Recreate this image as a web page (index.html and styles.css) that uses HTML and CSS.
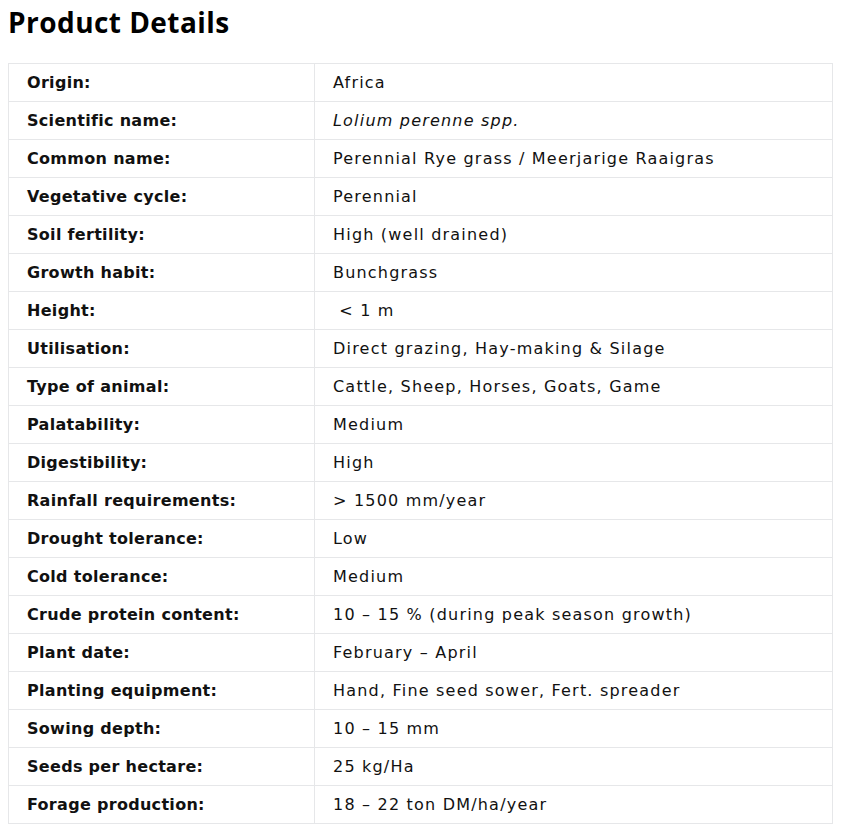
FILE: index.html
```html
<!DOCTYPE html>
<html>
<head>
<meta charset="utf-8">
<link rel="stylesheet" href="styles.css">
</head>
<body>
<h2 class="title">Product Details</h2>
<table class="details">
<tbody>
<tr><td class="label">Origin:</td><td class="value">Africa</td></tr>
<tr><td class="label">Scientific name:</td><td class="value"><em>Lolium perenne spp.</em></td></tr>
<tr><td class="label">Common name:</td><td class="value">Perennial Rye grass / Meerjarige Raaigras</td></tr>
<tr><td class="label">Vegetative cycle:</td><td class="value">Perennial</td></tr>
<tr><td class="label">Soil fertility:</td><td class="value">High (well drained)</td></tr>
<tr><td class="label">Growth habit:</td><td class="value">Bunchgrass</td></tr>
<tr><td class="label">Height:</td><td class="value">&nbsp;&lt; 1 m</td></tr>
<tr><td class="label">Utilisation:</td><td class="value">Direct grazing, Hay-making &amp; Silage</td></tr>
<tr><td class="label">Type of animal:</td><td class="value">Cattle, Sheep, Horses, Goats, Game</td></tr>
<tr><td class="label">Palatability:</td><td class="value">Medium</td></tr>
<tr><td class="label">Digestibility:</td><td class="value">High</td></tr>
<tr><td class="label">Rainfall requirements:</td><td class="value">&gt; 1500 mm/year</td></tr>
<tr><td class="label">Drought tolerance:</td><td class="value">Low</td></tr>
<tr><td class="label">Cold tolerance:</td><td class="value">Medium</td></tr>
<tr><td class="label">Crude protein content:</td><td class="value">10 – 15 % (during peak season growth)</td></tr>
<tr><td class="label">Plant date:</td><td class="value">February – April</td></tr>
<tr><td class="label">Planting equipment:</td><td class="value">Hand, Fine seed sower, Fert. spreader</td></tr>
<tr><td class="label">Sowing depth:</td><td class="value">10 – 15 mm</td></tr>
<tr><td class="label">Seeds per hectare:</td><td class="value">25 kg/Ha</td></tr>
<tr><td class="label">Forage production:</td><td class="value">18 – 22 ton DM/ha/year</td></tr>
</tbody>
</table>
</body>
</html>
```
FILE: styles.css
```css
html, body {
  margin: 0;
  padding: 0;
  background: #ffffff;
}
body {
  padding: 0 8px;
  font-family: "DejaVu Sans", "Open Sans", sans-serif;
  color: #111111;
}
.title {
  margin: 0;
  padding-top: 4px;
  font-family: "Open Sans", "DejaVu Sans", sans-serif;
  font-size: 28px;
  line-height: 36px;
  font-weight: 700;
  color: #000000;
  letter-spacing: 0.45px;
}
.details {
  margin-top: 23px;
  width: 825px;
  border-collapse: collapse;
  font-size: 16px;
}
.details td {
  border: 1px solid #e6e7e9;
  padding: 0 18px;
  height: 37px;
  line-height: 24px;
  vertical-align: middle;
}
.label {
  width: 269px;
  font-weight: 700;
  letter-spacing: 0.3px;
  color: #111111;
}
.value {
  font-weight: 400;
  letter-spacing: 1.2px;
  color: #111111;
}
```
